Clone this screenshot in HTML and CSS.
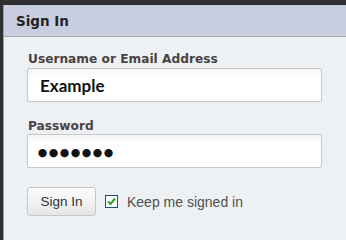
FILE: index.html
```html
<!DOCTYPE html>
<html>
<head>
<meta charset="utf-8">
<link rel="stylesheet" href="styles.css">
</head>
<body>
<div class="panel">
  <div class="panel-header"><h1 class="panel-title">Sign In</h1></div>
  <form class="panel-body">
    <label class="field-label" for="user">Username or Email Address</label>
    <input class="field-input" id="user" type="text" value="Example">
    <label class="field-label pw-label" for="pw">Password</label>
    <input class="field-input pw-input" id="pw" type="password" value="1234567">
    <div class="actions">
      <button class="btn" type="button">Sign In</button>
      <label class="remember">
        <span class="checkbox"><svg width="9" height="9" viewBox="0 0 9 9"><path d="M1 4.5 L3.5 7 L8 1.5" fill="none" stroke="#2ea12e" stroke-width="2"/></svg></span>
        <span class="remember-text">Keep me signed in</span>
      </label>
    </div>
  </form>
</div>
</body>
</html>
```

FILE: styles.css
```css
html, body { margin: 0; padding: 0; }
html { background: #2f2f31; overflow: hidden; }
body {
  background: #2f2f31;
  width: 346px;
  min-height: 100vh;
}
.panel {
  margin: 5px 0 0 3px;
  border-left: 1px solid #9a9ca4;
  background: #edf1f4;
  min-height: calc(100vh - 5px);
}
.panel-header {
  background: #c9cde0;
  height: 31px;
  border-bottom: 1px solid #aaaaab;
  display: flex;
  align-items: center;
  padding-left: 12px;
}
.panel-title {
  margin: 0;
  font-family: "DejaVu Sans", sans-serif;
  font-weight: bold;
  font-size: 13.5px;
  color: #222;
}
.panel-body {
  padding: 14px 24px 0 23px;
  display: flex;
  flex-direction: column;
  align-items: flex-start;
}
.field-label {
  font-family: "DejaVu Sans", sans-serif;
  font-weight: bold;
  font-size: 12.2px;
  line-height: 16px;
  color: #4a4242;
  padding-left: 1px;
}
.field-input {
  box-sizing: border-box;
  width: 295px;
  height: 34px;
  margin: 0;
  margin-top: 1px;
  border: 1px solid #c4c6ca;
  border-radius: 2px;
  background: linear-gradient(#f4f4f4, #ffffff 8px);
  padding: 0 12px;
  font-family: "Lato", sans-serif;
  font-weight: bold;
  font-size: 17px;
  color: #111;
  outline: none;
}
.pw-label { margin-top: 16px; }
.pw-input {
  margin-top: 0;
  font-size: 19px;
  letter-spacing: 0;
  padding-left: 9px;
}
.actions {
  margin-top: 19px;
  display: flex;
  align-items: center;
}
.btn {
  box-sizing: border-box;
  width: 69px;
  height: 29px;
  border: 1px solid #c6c6c6;
  border-radius: 3px;
  background: linear-gradient(#fdfdfd, #e6e6e6);
  font-family: "Liberation Sans", Arial, sans-serif;
  font-size: 13.5px;
  color: #333;
  padding: 0;
}
.remember {
  display: flex;
  align-items: center;
  margin-left: 9px;
}
.checkbox {
  box-sizing: border-box;
  width: 13px;
  height: 13px;
  border: 1px solid #1d4e7e;
  background: #fff;
  display: flex;
  align-items: center;
  justify-content: center;
}
.remember-text {
  margin-left: 9px;
  font-family: "Liberation Sans", Arial, sans-serif;
  font-size: 14px;
  color: #505050;
}
```
